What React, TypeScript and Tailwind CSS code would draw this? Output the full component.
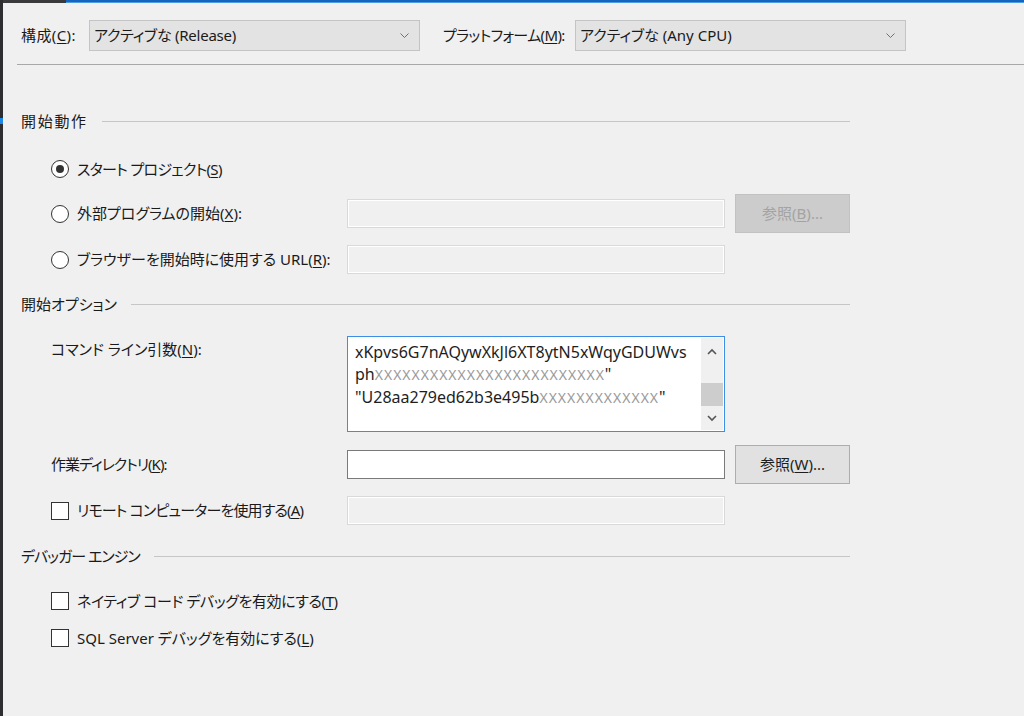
import type { ReactNode } from "react";

const font = {
  fontFamily: '"Noto Sans", "Noto Sans CJK JP", sans-serif',
  fontFeatureSettings: '"palt"',
};

// underlined access key, e.g. (C)
const Key = ({ k }: { k: string }) => (
  <>
    (<span className="underline underline-offset-2">{k}</span>)
  </>
);

const Chevron = ({ up }: { up?: boolean }) => (
  <svg width="10" height="7" viewBox="0 0 10 7" className="block">
    <polyline
      points={up ? "1,6 5,2 9,6" : "1,1 5,5 9,1"}
      fill="none"
      stroke="#555555"
      strokeWidth="1.6"
    />
  </svg>
);

const Select = ({ value, className = "" }: { value: string; className?: string }) => (
  <div className="flex h-[31px] w-[331px] items-center justify-between border border-[#c4c4c4] bg-[#e3e3e3] pl-[4px] pr-[10px]">
    <span className={className}>{value}</span>
    <svg width="9" height="5" viewBox="0 0 9 5">
      <polyline points="0.5,0.5 4.5,4.5 8.5,0.5" fill="none" stroke="#707070" strokeWidth="1" />
    </svg>
  </div>
);

const SectionHeader = ({
  title,
  className,
  track,
}: {
  title: string;
  className: string;
  track: string;
}) => (
  <div className={`flex h-[24px] w-[833px] items-center pl-[4px] ${className}`}>
    <span className={`whitespace-nowrap ${track}`}>{title}</span>
    <div className="ml-[14px] h-px flex-1 bg-[#c6c6c6]" />
  </div>
);

const Radio = ({ checked }: { checked?: boolean }) => (
  <div className="flex h-[18px] w-[18px] items-center justify-center rounded-full border border-[#333333] bg-white">
    {checked && <div className="h-[8px] w-[8px] rounded-full bg-[#333333]" />}
  </div>
);

const Check = () => <div className="h-[18px] w-[18px] border border-[#333333] bg-white" />;

const DisabledInput = () => (
  <div className="h-[29px] w-[378px] border border-[#d9d9d9] bg-[#f0f0f0] shadow-[inset_0_0_0_1px_#ffffff]" />
);

const Button = ({ children, disabled }: { children: ReactNode; disabled?: boolean }) => (
  <div
    className={`ml-[10px] flex h-[39px] w-[115px] items-center justify-center border ${
      disabled
        ? "border-[#c2c2c2] bg-[#cccccc] text-[#a3a3a3]"
        : "border-[#adadad] bg-[#e1e1e1] text-[#1e1e1e]"
    }`}
  >
    {children}
  </div>
);

const Row = ({
  control,
  label,
  className,
  track = "",
  children,
}: {
  control?: ReactNode;
  label: ReactNode;
  className: string;
  track?: string;
  children?: ReactNode;
}) => (
  <div className={`flex items-center pl-[34px] ${className}`}>
    <div className="flex w-[296px] items-center">
      {control}
      <span className={`whitespace-nowrap ${control ? "ml-[8px]" : ""} ${track}`}>{label}</span>
    </div>
    {children}
  </div>
);

const Mask = ({ n }: { n: number }) => (
  <span className="text-[14px] tracking-[1px] text-[#9a9a9a]">{"X".repeat(n)}</span>
);

const ArgsBox = () => (
  <div className="flex h-[96px] w-[378px] border border-[#3d8ee6] bg-white">
    <div className="flex-1 pl-[7px] pt-[4px] text-[16px] leading-[22px] text-[#1e1e1e]">
      <div>xKpvs6G7nAQywXkJl6XT8ytN5xWqyGDUWvs</div>
      <div>
        ph<Mask n={25} />"
      </div>
      <div>
        "U28aa279ed62b3e495b<Mask n={13} />"
      </div>
    </div>
    <div className="m-[1px] flex w-[22px] flex-col items-center bg-[#f0f0f0]">
      <div className="flex h-[26px] items-center">
        <Chevron up />
      </div>
      <div className="mt-[19px] h-[23px] w-full bg-[#cdcdcd]" />
      <div className="flex flex-1 items-center">
        <Chevron />
      </div>
    </div>
  </div>
);

export default function App() {
  return (
    <div
      className="flex h-[716px] w-[1024px] overflow-hidden bg-[#f0f0f0] text-[15px] text-[#1a1a1a]"
      style={font}
    >
      {/* window edge */}
      <div className="flex w-[3px] flex-col bg-[#2e2e30]">
        <div className="h-[118px]" />
        <div className="h-[6px] bg-[#1e88e5]" />
      </div>

      <div className="flex flex-1 flex-col">
        <div className="flex h-[3px]">
          <div className="w-[63px] bg-[#3a3a3c]" />
          <div className="flex flex-1 flex-col">
            <div className="h-[2px] bg-[#1565c0]" />
            <div className="h-px bg-[#4d9de0]" />
          </div>
        </div>

        <div className="flex flex-col pl-[14px]">
          {/* configuration / platform */}
          <div className="mt-[17px] flex items-center pl-[4px]">
            <span className="w-[68px] tracking-[0.4px]">
              構成<Key k="C" />:
            </span>
            <Select value="アクティブな (Release)" className="tracking-[-0.25px]" />
            <span className="ml-[23px] w-[132px] tracking-[-0.65px]">
              プラットフォーム<Key k="M" />:
            </span>
            <Select value="アクティブな (Any CPU)" />
          </div>
          <div className="mt-[13px] h-px bg-[#a8a8a8]" />

          <SectionHeader title="開始動作" track="tracking-[1.7px]" className="mt-[44px]" />

          <Row
            className="mt-[24px] h-[24px]"
            track="tracking-[-0.7px]"
            control={<Radio checked />}
            label={<>スタート プロジェクト<Key k="S" /></>}
          />

          <Row className="mt-[13px] h-[39px]" control={<Radio />} label={<>外部プログラムの開始<Key k="X" />:</>}>
            <DisabledInput />
            <Button disabled>
              参照<Key k="B" />...
            </Button>
          </Row>

          <Row className="mt-[12px] h-[29px]" control={<Radio />} label={<>ブラウザーを開始時に使用する URL<Key k="R" />:</>}>
            <DisabledInput />
          </Row>

          <SectionHeader title="開始オプション" track="" className="mt-[18px]" />

          <div className="mt-[20px] flex pl-[34px]">
            <div className="w-[296px] pt-[2px]">
              コマンド ライン引数<Key k="N" />:
            </div>
            <ArgsBox />
          </div>

          <Row className="mt-[13px] h-[39px]" track="tracking-[-1px]" label={<>作業ディレクトリ<Key k="K" />:</>}>
            <div className="h-[29px] w-[378px] border border-[#7a7a7a] bg-white" />
            <Button>
              参照<Key k="W" />...
            </Button>
          </Row>

          <Row
            className="mt-[12px] h-[29px]"
            track="tracking-[-0.85px]"
            control={<Check />}
            label={<>リモート コンピューターを使用する<Key k="A" /></>}
          >
            <DisabledInput />
          </Row>

          <SectionHeader title="デバッガー エンジン" track="tracking-[-1px]" className="mt-[19px]" />

          <Row
            className="mt-[21px] h-[24px]"
            track="tracking-[-0.4px]"
            control={<Check />}
            label={<>ネイティブ コード デバッグを有効にする<Key k="T" /></>}
          />
          <Row
            className="mt-[13px] h-[24px]"
            control={<Check />}
            label={<>SQL Server デバッグを有効にする<Key k="L" /></>}
          />
        </div>
      </div>
    </div>
  );
}
